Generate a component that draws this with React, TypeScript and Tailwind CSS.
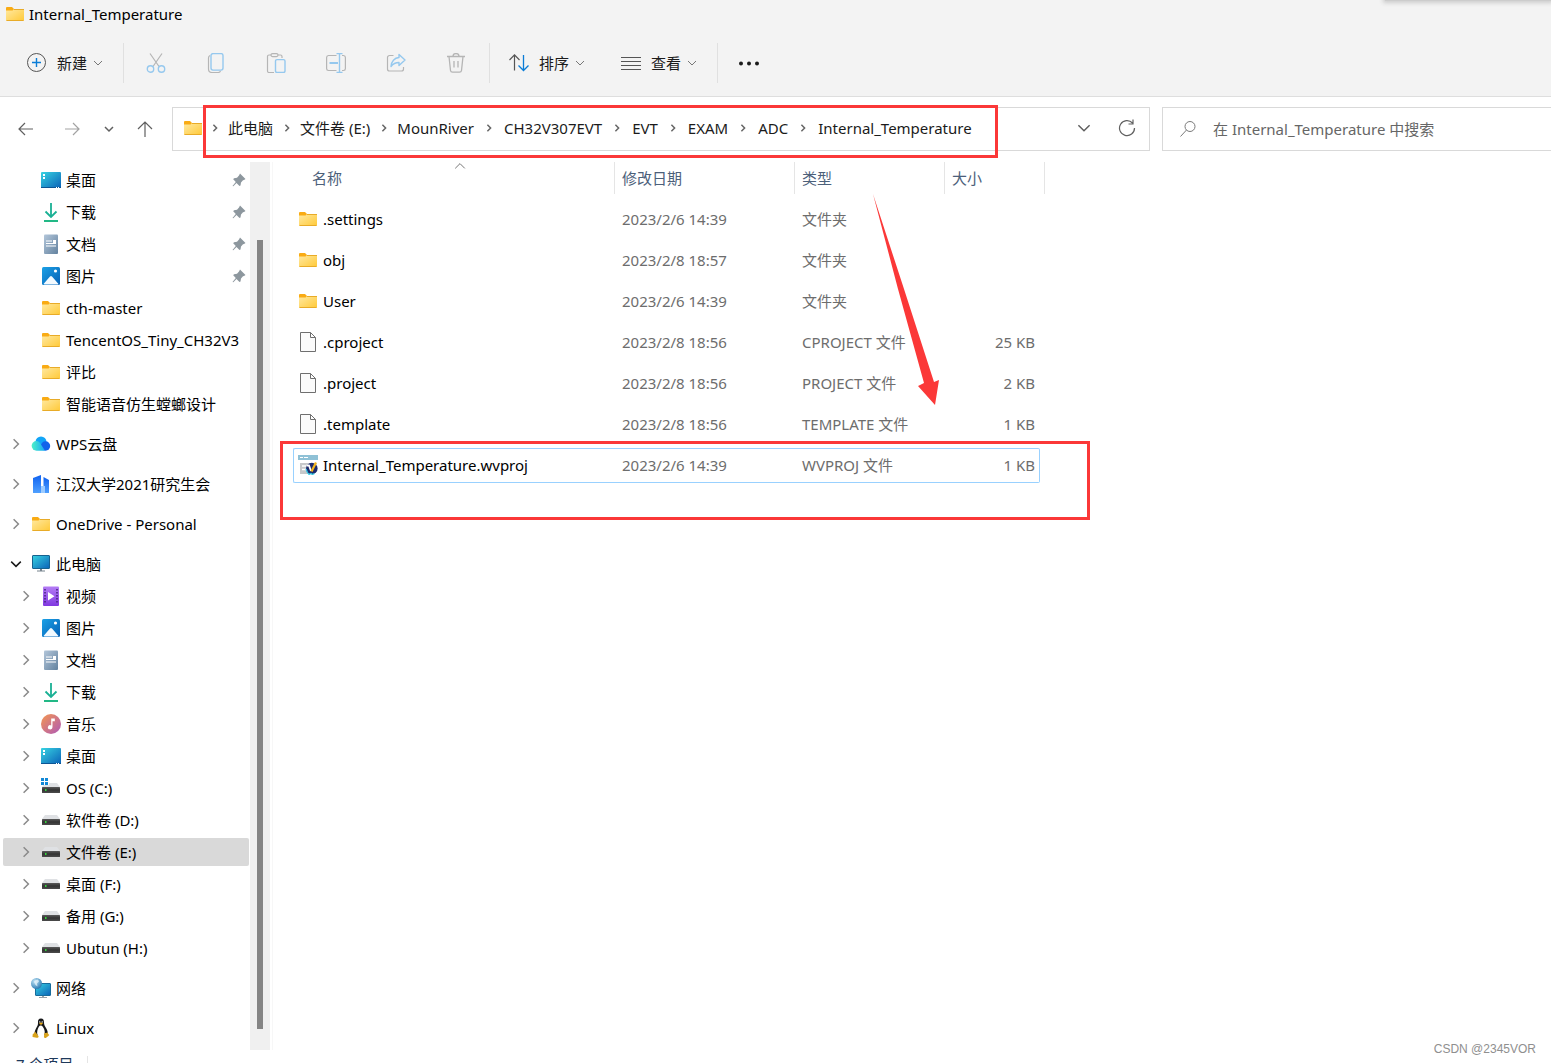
import { useState } from 'react';
import type { ReactNode } from 'react';
import clsx from 'clsx';

type IconName =
    | 'folder' | 'desktop' | 'download' | 'document' | 'picture' | 'cloud' | 'building'
    | 'pc' | 'video' | 'music' | 'osDrive' | 'drive' | 'network' | 'linux' | 'file' | 'wvproj';

interface TreeItem {
    label: string;
    icon: IconName;
    nested?: boolean;
    pinned?: boolean;
    arrow?: 'closed' | 'open';
    current?: boolean;
}

interface FileItem {
    name: string;
    date: string;
    type: string;
    size: string;
    icon: IconName;
}

const tree: TreeItem[] = [
    { label: '桌面', icon: 'desktop', nested: true, pinned: true },
    { label: '下载', icon: 'download', nested: true, pinned: true },
    { label: '文档', icon: 'document', nested: true, pinned: true },
    { label: '图片', icon: 'picture', nested: true, pinned: true },
    { label: 'cth-master', icon: 'folder', nested: true },
    { label: 'TencentOS_Tiny_CH32V3', icon: 'folder', nested: true },
    { label: '评比', icon: 'folder', nested: true },
    { label: '智能语音仿生螳螂设计', icon: 'folder', nested: true },
    { label: 'WPS云盘', icon: 'cloud', arrow: 'closed' },
    { label: '江汉大学2021研究生会', icon: 'building', arrow: 'closed' },
    { label: 'OneDrive - Personal', icon: 'folder', arrow: 'closed' },
    { label: '此电脑', icon: 'pc', arrow: 'open' },
    { label: '视频', icon: 'video', nested: true, arrow: 'closed' },
    { label: '图片', icon: 'picture', nested: true, arrow: 'closed' },
    { label: '文档', icon: 'document', nested: true, arrow: 'closed' },
    { label: '下载', icon: 'download', nested: true, arrow: 'closed' },
    { label: '音乐', icon: 'music', nested: true, arrow: 'closed' },
    { label: '桌面', icon: 'desktop', nested: true, arrow: 'closed' },
    { label: 'OS (C:)', icon: 'osDrive', nested: true, arrow: 'closed' },
    { label: '软件卷 (D:)', icon: 'drive', nested: true, arrow: 'closed' },
    { label: '文件卷 (E:)', icon: 'drive', nested: true, arrow: 'closed', current: true },
    { label: '桌面 (F:)', icon: 'drive', nested: true, arrow: 'closed' },
    { label: '备用 (G:)', icon: 'drive', nested: true, arrow: 'closed' },
    { label: 'Ubutun (H:)', icon: 'drive', nested: true, arrow: 'closed' },
    { label: '网络', icon: 'network', arrow: 'closed' },
    { label: 'Linux', icon: 'linux', arrow: 'closed' },
];

const files: FileItem[] = [
    { name: '.settings', date: '2023/2/6 14:39', type: '文件夹', size: '', icon: 'folder' },
    { name: 'obj', date: '2023/2/8 18:57', type: '文件夹', size: '', icon: 'folder' },
    { name: 'User', date: '2023/2/6 14:39', type: '文件夹', size: '', icon: 'folder' },
    { name: '.cproject', date: '2023/2/8 18:56', type: 'CPROJECT 文件', size: '25 KB', icon: 'file' },
    { name: '.project', date: '2023/2/8 18:56', type: 'PROJECT 文件', size: '2 KB', icon: 'file' },
    { name: '.template', date: '2023/2/8 18:56', type: 'TEMPLATE 文件', size: '1 KB', icon: 'file' },
    { name: 'Internal_Temperature.wvproj', date: '2023/2/6 14:39', type: 'WVPROJ 文件', size: '1 KB', icon: 'wvproj' },
];

const crumbs = ['此电脑', '文件卷 (E:)', 'MounRiver', 'CH32V307EVT', 'EVT', 'EXAM', 'ADC', 'Internal_Temperature'];

// Gradients shared by all the small icons
function Gradients() {
    return (
        <svg width="0" height="0" className="absolute" aria-hidden="true">
            <defs>
                <linearGradient id="gFolder" x1="0" y1="0" x2="1" y2="1">
                    <stop offset="0" stopColor="#ffe9a2" />
                    <stop offset="1" stopColor="#ffc937" />
                </linearGradient>
                <linearGradient id="gScreen" x1="0" y1="0" x2="1" y2="1">
                    <stop offset="0" stopColor="#37d3e2" />
                    <stop offset="1" stopColor="#0b62b8" />
                </linearGradient>
                <linearGradient id="gDoc" x1="0" y1="0" x2="1" y2="1">
                    <stop offset="0" stopColor="#b3c6da" />
                    <stop offset="1" stopColor="#63829f" />
                </linearGradient>
                <linearGradient id="gPic" x1="0" y1="0" x2="1" y2="1">
                    <stop offset="0" stopColor="#1ba1e6" />
                    <stop offset="1" stopColor="#0660b5" />
                </linearGradient>
                <linearGradient id="gVideo" x1="0" y1="0" x2="0" y2="1">
                    <stop offset="0" stopColor="#b47cf5" />
                    <stop offset="1" stopColor="#8038e0" />
                </linearGradient>
                <linearGradient id="gMusic" x1="0" y1="0" x2="1" y2="1">
                    <stop offset="0" stopColor="#f5974f" />
                    <stop offset="1" stopColor="#ae58b8" />
                </linearGradient>
                <linearGradient id="gBuild" x1="0" y1="0" x2="0" y2="1">
                    <stop offset="0" stopColor="#0f62f0" />
                    <stop offset="1" stopColor="#4fa0ff" />
                </linearGradient>
                <linearGradient id="gCloud" x1="0" y1="0" x2="1" y2="0">
                    <stop offset="0" stopColor="#4df0c8" />
                    <stop offset="1" stopColor="#19a8f5" />
                </linearGradient>
                <linearGradient id="gDrive" x1="0" y1="0" x2="0" y2="1">
                    <stop offset="0" stopColor="#5a5a5a" />
                    <stop offset="0.5" stopColor="#333333" />
                    <stop offset="1" stopColor="#4c4c4c" />
                </linearGradient>
                <radialGradient id="gGlobe" cx="0.35" cy="0.3" r="0.8">
                    <stop offset="0" stopColor="#bfe3f5" />
                    <stop offset="1" stopColor="#1f72ad" />
                </radialGradient>
            </defs>
        </svg>
    );
}

const driveBody = (
    <>
        <path d="M4 5h12l3 4H1z" fill="#dfe1e4" />
        <rect x="1" y="9" width="18" height="6" rx="0.5" fill="url(#gDrive)" />
        <rect x="4" y="11" width="1.500" height="2" fill="#35d43c" />
    </>
);

const iconShapes: Record<IconName, ReactNode> = {
    folder: (
        <>
            <path d="M1 4a1 1 0 0 1 1-1h5l2 2v3H1z" fill="#f9ab14" />
            <path d="M1 6.500h6.500L9 5h10v11a1 1 0 0 1-1 1H2a1 1 0 0 1-1-1z" fill="url(#gFolder)" />
            <path d="M9 5.500h10M1.500 16.500h17" stroke="#e8ab28" fill="none" />
        </>
    ),
    desktop: (
        <>
            <rect x="0" y="2" width="20" height="16" rx="1" fill="url(#gScreen)" />
            <path d="M2 4h2v2H2zM2 7h2v2H2z" fill="#fff" />
            <path d="M0 17h20v1H0z" fill="#0c5594" />
            <path d="M15 17h1v1h-1zM17 17h1v1h-1z" fill="#fff" />
        </>
    ),
    download: (
        <>
            <path d="M10 1v14M4.500 9.500L10 15l5.500-5.500" stroke="#19b094" strokeWidth="1.800" fill="none" />
            <path d="M3 19h14" stroke="#22b886" strokeWidth="2" />
        </>
    ),
    document: (
        <>
            <rect x="3" y="0.500" width="14" height="19.500" rx="1" fill="url(#gDoc)" />
            <path d="M5 7h6M5 9.500h10M5 12h10" stroke="#fff" strokeWidth="1.200" />
            <rect x="12" y="6" width="3" height="3" fill="#fff" />
        </>
    ),
    picture: (
        <>
            <rect x="1" y="1" width="18" height="18" rx="1.500" fill="url(#gPic)" />
            <path d="M2.500 18l6.500-7.500a1.300 1.300 0 0 1 2 0l6.500 7.500a1 1 0 0 1-1 .5h-13z" fill="#f3faff" />
            <circle cx="14.500" cy="5" r="1.600" fill="#fff" />
        </>
    ),
    cloud: (
        <>
            <circle cx="10" cy="8" r="5.500" fill="#12a5f7" />
            <circle cx="14.500" cy="12" r="4.700" fill="#1363ea" />
            <path d="M5.500 7a4.800 4.800 0 1 0 0 9.700H14L9 9a4.500 4.500 0 0 0-3.500-2z" fill="url(#gCloud)" />
        </>
    ),
    building: (
        <>
            <path d="M2 4L10 1v18H2z" fill="url(#gBuild)" />
            <path d="M12.500 3l5.500 3v13h-4v-7h-1.500z" fill="url(#gBuild)" />
            <path d="M10 12h4v7h-4z" fill="#9ccbff" />
        </>
    ),
    pc: (
        <>
            <rect x="1.500" y="1.500" width="17" height="13" rx="0.500" fill="url(#gScreen)" stroke="#17628f" />
            <path d="M9 15h2v1.500h3v1H6v-1h3z" fill="#77848e" />
        </>
    ),
    video: (
        <>
            <rect x="2" y="0.500" width="16" height="19.500" rx="1" fill="url(#gVideo)" />
            <path d="M4 3v15M16 3v15" stroke="#43217d" strokeWidth="1.500" strokeDasharray="1.500 1.500" />
            <path d="M7 6l6.500 4.300L7 14.500z" fill="#fff" />
        </>
    ),
    music: (
        <>
            <circle cx="10" cy="10" r="10" fill="url(#gMusic)" />
            <path d="M10.200 4.500h3.600v2.800h-2.300v6a2.300 2.100 0 1 1-1.300-1.900z" fill="#fff" />
        </>
    ),
    osDrive: (
        <>
            {driveBody}
            <path d="M0 0h8v7H0z" fill="#fff" />
            <path d="M0 0h3v3H0zM4 0h3v3H4zM0 4h3v3H0zM4 4h3v3H4z" fill="#1288d6" />
        </>
    ),
    drive: driveBody,
    network: (
        <>
            <rect x="4.500" y="5.500" width="15" height="12" rx="0.500" fill="url(#gScreen)" stroke="#176c9c" />
            <path d="M11 18h2v1h3v1H8v-1h3z" fill="#9aa3aa" />
            <circle cx="5.500" cy="5.500" r="5.500" fill="url(#gGlobe)" />
            <path d="M4 2.500l3-1 1 2-2 2 .5 3-2-1.500-1.500-3z" fill="#eef8fd" fillOpacity="0.700" />
        </>
    ),
    linux: (
        <>
            <path d="M10 0.500c-2.400 0-3.300 1.700-3 4.200.2 2.300-.9 3.700-2 5.900-1 2-2 4.400-1 6.400h12.500c.8-2.500-.3-5-1.500-7-1.300-2.100-2-3.200-2-5.500 0-2.400-.8-4-3-4z" fill="#17181a" />
            <path d="M9.800 7.500c-1.600 0-2.200 1.500-2.800 3-.8 2-1.300 4.800-.3 6.700 1.500 1.600 5 1.600 6.500 0 1-2 .6-4.700-.4-6.700-.7-1.500-1.400-3-3-3z" fill="#fff" />
            <path d="M8 5.200c1.200-1 2.800-1 4 0L10 7z" fill="#e6a91a" />
            <circle cx="8.800" cy="3.900" r="0.700" fill="#fff" />
            <circle cx="11.200" cy="3.900" r="0.700" fill="#fff" />
            <path d="M4 13.500l3.500 4.500c.3 1.300-.5 2-2 1.800L1.700 19c-.5-.8.1-1.500.1-3 .8-.3 1.500-1 2.200-2.500zM13.500 14.500c1 1 2.500.7 3-.2.4 1.500 1.300 2 1.800 2.700-.7 1.200-2.300 2-3.500 2.900-1.500.3-2-.7-1.800-2z" fill="#d9a31c" />
        </>
    ),
    file: (
        <path d="M2.500 0.500h10l5 5v14h-15zM12.500 0.500v5h5" fill="#fbfbfb" stroke="#6f6f6f" />
    ),
    wvproj: (
        <>
            <rect x="0" y="0" width="20" height="5" fill="#8fc1d6" />
            <path d="M2 2.500h3M6 2.500h4" stroke="#fff" />
            <path d="M2 8h12v11H2z" fill="#c6c8ca" />
            <path d="M4 11h4M4 14.500h4" stroke="#fff" strokeWidth="1.500" />
            <circle cx="13.800" cy="13.500" r="5.800" fill="#1d2a6d" />
            <path d="M8 14l1.500 3.500 1.500 2 2-1 1.500 1 2-1" stroke="#2fc9e6" strokeWidth="1.200" fill="none" />
            <path d="M8.500 10.500h2.500l2 5.500" stroke="#fff" strokeWidth="1.800" fill="none" />
            <path d="M13.500 16.500l4.500-9" stroke="#f4b51d" strokeWidth="2.200" fill="none" />
        </>
    ),
};

function Icon({ name }: { name: IconName }) {
    return (
        <svg viewBox="0 0 20 20" className="h-5 w-5 shrink-0" aria-hidden="true">
            {iconShapes[name]}
        </svg>
    );
}

function Chevron({ direction, className }: { direction: 'right' | 'down' | 'up'; className: string }) {
    return (
        <svg
            viewBox="0 0 10 10"
            className={clsx('shrink-0', direction === 'down' && 'rotate-90', direction === 'up' && '-rotate-90', className)}
            fill="none"
            stroke="currentColor"
            aria-hidden="true"
        >
            <path d="M3 1l4 4-4 4" vectorEffect="non-scaling-stroke" />
        </svg>
    );
}

function ToolIcon({ children }: { children: ReactNode }) {
    return (
        <svg viewBox="0 0 20 20" className="h-5 w-5 shrink-0" fill="none" aria-hidden="true">
            {children}
        </svg>
    );
}

const disabledTools: { label: string; shape: ReactNode }[] = [
    {
        label: '剪切',
        shape: (
            <>
                <path d="M4 0.500l9 13M16 0.500l-9 13" stroke="#b5b5b5" strokeWidth="1.200" />
                <circle cx="4.500" cy="16" r="3.200" stroke="#95c8ee" strokeWidth="1.400" />
                <circle cx="15.500" cy="16" r="3.200" stroke="#95c8ee" strokeWidth="1.400" />
            </>
        ),
    },
    {
        label: '复制',
        shape: (
            <>
                <path d="M4 2.500C3 3 2.500 3.500 2.500 5v11c0 2 1.500 3.500 3.500 3.500h6c1.300 0 2-.5 2.500-1.500" stroke="#b5b5b5" strokeWidth="1.200" />
                <rect x="5" y="0.600" width="12" height="16.500" rx="2" stroke="#95c8ee" strokeWidth="1.400" />
            </>
        ),
    },
    {
        label: '粘贴',
        shape: (
            <>
                <path d="M8 19.500H3A1.500 1.500 0 0 1 1.500 18V3.500A1.500 1.500 0 0 1 3 2h2M12 2h2.500A1.500 1.500 0 0 1 16 3.500V5" stroke="#b5b5b5" strokeWidth="1.200" />
                <rect x="5" y="0.600" width="7" height="3" rx="1.500" stroke="#b5b5b5" strokeWidth="1.200" />
                <rect x="9.500" y="6.600" width="9.500" height="12.900" rx="1.500" stroke="#95c8ee" strokeWidth="1.400" />
            </>
        ),
    },
    {
        label: '重命名',
        shape: (
            <>
                <path d="M10.500 2.500H2.500A2 2 0 0 0 .6 4.500v11a2 2 0 0 0 1.900 2h8M16 2.500h1.500a2 2 0 0 1 1.900 2v11a2 2 0 0 1-1.900 2H16" stroke="#b5b5b5" strokeWidth="1.200" />
                <path d="M3.500 10H12" stroke="#95c8ee" strokeWidth="2" />
                <path d="M13.500 0.600v18.800M10.500 0.600h6M10.500 19.400h6" stroke="#95c8ee" strokeWidth="1.400" />
            </>
        ),
    },
    {
        label: '共享',
        shape: (
            <>
                <path d="M7.500 2.500H3.500a2 2 0 0 0-2 2v11.500a2 2 0 0 0 2 2h12a2 2 0 0 0 2-2V14" stroke="#b5b5b5" strokeWidth="1.200" />
                <path d="M13 1.500L19 7l-6 5.500V9.500c-3.500 0-5.800 1-8 4 .3-5 3.500-8.700 8-9z" stroke="#95c8ee" strokeWidth="1.400" strokeLinejoin="round" />
            </>
        ),
    },
    {
        label: '删除',
        shape: (
            <>
                <path d="M1 3.500h18M7 3.300a3 2.700 0 0 1 6 0M3 3.500l1.500 14a2 2 0 0 0 2 1.700h7a2 2 0 0 0 2-1.700l1.500-14" stroke="#b5b5b5" strokeWidth="1.300" />
                <path d="M8 8v6.500M12 8v6.500" stroke="#b5b5b5" strokeWidth="1.300" />
            </>
        ),
    },
];

function Toolbar() {
    return (
        <div className="flex h-[66px] items-center border-b border-[#dedede] pb-0.5 pl-[27px] text-[#1b1b1b]">
            <button className="flex items-center">
                <ToolIcon>
                    <circle cx="9.500" cy="9.500" r="9" stroke="#555" />
                    <path d="M9.500 5v9M5 9.500h9" stroke="#0a7cd6" strokeWidth="1.400" />
                </ToolIcon>
                <span className="ml-2.5">新建</span>
                <Chevron direction="down" className="ml-1.5 h-2.5 w-2.5 text-[#777]" />
            </button>
            <div className="ml-5 h-10 w-px bg-[#e0e0e0]" />
            <div className="ml-0.5 flex">
                {disabledTools.map((tool) => (
                    <button key={tool.label} aria-label={tool.label} disabled className="flex h-10 w-[60px] items-center justify-center">
                        <ToolIcon>{tool.shape}</ToolIcon>
                    </button>
                ))}
            </div>
            <div className="ml-[3px] h-10 w-px bg-[#e0e0e0]" />
            <button className="ml-[19px] flex items-center">
                <ToolIcon>
                    <path d="M5.500 17.500V2M0.500 7l5-5.200L10.500 7" stroke="#555" strokeWidth="1.200" />
                    <path d="M14.500 2v15.500M9.500 12.500l5 5 5-5" stroke="#0a7cd6" strokeWidth="1.300" />
                </ToolIcon>
                <span className="ml-2.5">排序</span>
                <Chevron direction="down" className="ml-1.5 h-2.5 w-2.5 text-[#777]" />
            </button>
            <button className="ml-9 flex items-center">
                <ToolIcon>
                    <path d="M0 4.500h20M0 8.500h20M0 12.500h20M0 16.500h20" stroke="#555" />
                </ToolIcon>
                <span className="ml-2.5">查看</span>
                <Chevron direction="down" className="ml-1.5 h-2.5 w-2.5 text-[#777]" />
            </button>
            <div className="ml-5 h-10 w-px bg-[#e0e0e0]" />
            <button aria-label="更多" className="ml-[21px]">
                <ToolIcon>
                    <circle cx="2" cy="10.500" r="2" fill="#1b1b1b" />
                    <circle cx="10" cy="10.500" r="2" fill="#1b1b1b" />
                    <circle cx="18" cy="10.500" r="2" fill="#1b1b1b" />
                </ToolIcon>
            </button>
        </div>
    );
}

function NavBar() {
    return (
        <div className="flex items-center pt-2.5 pb-[5px]">
            <div className="flex w-[172px] shrink-0 items-center gap-1.5 pl-1.5 text-[#606060]">
                <button aria-label="后退" className="flex w-10 justify-center">
                    <svg viewBox="0 0 16 16" className="h-4 w-4" fill="none" stroke="currentColor" strokeWidth="1.200">
                        <path d="M15 8H1M7 2L1 8l6 6" />
                    </svg>
                </button>
                <button aria-label="前进" className="flex w-10 justify-center text-[#a3a3a3]">
                    <svg viewBox="0 0 16 16" className="h-4 w-4" fill="none" stroke="currentColor" strokeWidth="1.200">
                        <path d="M1 8h14M9 2l6 6-6 6" />
                    </svg>
                </button>
                <button aria-label="最近浏览的位置" className="flex w-[22px] justify-center">
                    <Chevron direction="down" className="h-2.5 w-2.5 stroke-[1.5]" />
                </button>
                <button aria-label="向上" className="flex w-[38px] justify-center">
                    <svg viewBox="0 0 16 16" className="h-4 w-4" fill="none" stroke="currentColor" strokeWidth="1.200">
                        <path d="M8 16V1M1 8l7-7 7 7" />
                    </svg>
                </button>
            </div>
            <div className="flex h-11 min-w-0 flex-1 items-center border border-[#d9d9d9] pb-0.5 pl-2.5 text-[#1b1b1b]">
                <Icon name="folder" />
                {crumbs.map((crumb, i) => (
                    <div key={crumb} className={clsx('flex items-center', i === 0 && '-ml-0.5')}>
                        <span className={clsx('flex justify-center text-[#666]', i < 3 ? 'w-[27px]' : 'w-[30px]')}>
                            <Chevron direction="right" className="h-2 w-2 stroke-[1.5]" />
                        </span>
                        <a href="#" className="whitespace-nowrap">{crumb}</a>
                    </div>
                ))}
                <button aria-label="以前的位置" className="ml-auto flex w-[43px] shrink-0 justify-center text-[#606060]">
                    <Chevron direction="down" className="h-3.5 w-3.5 stroke-[1.5]" />
                </button>
                <button aria-label="刷新" className="flex w-11 shrink-0 justify-center text-[#606060]">
                    <svg viewBox="0 0 18 18" className="h-[18px] w-[18px]" fill="none" stroke="currentColor" strokeWidth="1.200">
                        <path d="M14.500 4A7.500 7.500 0 1 0 16.500 9M15 0.500v4.500h-4.500" />
                    </svg>
                </button>
            </div>
            <label className="ml-3 flex h-11 w-[389px] shrink-0 items-center border border-r-0 border-[#d9d9d9] pl-[17px]">
                <svg viewBox="0 0 16 16" className="h-4 w-4 shrink-0" fill="none" stroke="#7a7a7a">
                    <circle cx="10" cy="5.500" r="5" />
                    <path d="M6.500 9L0.500 15.500" />
                </svg>
                <input
                    type="search"
                    aria-label="搜索"
                    placeholder="在 Internal_Temperature 中搜索"
                    className="ml-[17px] min-w-0 flex-1 outline-none placeholder:text-[#666]"
                />
            </label>
        </div>
    );
}

function Sidebar() {
    return (
        <nav className="w-[250px] shrink-0 pt-0.5 pb-1.5">
            <ul>
                {tree.map((item, i) => (
                    <li key={i} className={clsx('pr-px pl-[3px]', !item.nested && 'pt-2')}>
                        <div className="flex h-8 items-center">
                            <a
                                href="#"
                                className={clsx(
                                    'flex h-7 w-full items-center gap-[5px] rounded-xs',
                                    item.nested ? 'pl-[13px]' : 'pl-[3px]',
                                    item.current && 'bg-[#d9d9d9]'
                                )}
                            >
                                <span className="flex w-5 shrink-0 justify-center">
                                    {item.arrow === 'closed' && <Chevron direction="right" className="h-3 w-3 stroke-[1.5] text-[#8a8a8a]" />}
                                    {item.arrow === 'open' && <Chevron direction="down" className="h-3 w-3 stroke-[1.5] text-[#1b1b1b]" />}
                                </span>
                                <Icon name={item.icon} />
                                <span className="whitespace-nowrap">{item.label}</span>
                                {item.pinned && (
                                    <svg viewBox="0 0 14 14" className="mr-[3px] ml-auto h-3.5 w-3.5" fill="#8d979e">
                                        <path d="M8 0.500L13.500 6l-1.500 1-1 .2-2 2.300-.5 3-1 .5-3-3L1.300 13.300.5 13l3.300-4L1.200 6.200l.8-1 3-.5L7 2.500z" />
                                    </svg>
                                )}
                            </a>
                        </div>
                    </li>
                ))}
            </ul>
        </nav>
    );
}

function FileTable() {
    const [selected, setSelected] = useState('Internal_Temperature.wvproj');

    return (
        <table className="w-[747px] table-fixed border-separate border-spacing-x-0 border-spacing-y-1.5">
            <colgroup>
                <col className="w-[322px]" />
                <col className="w-[180px]" />
                <col className="w-[150px]" />
                <col className="w-[95px]" />
            </colgroup>
            <thead>
                <tr className="h-[34px] text-left align-top text-[#4c607a]">
                    <th className="p-0 font-normal">
                        <div className="relative flex h-8 items-center border-r border-[#e5e5e5] pl-[19px]">
                            名称
                            <Chevron direction="up" className="absolute top-[-2px] left-[161px] h-3 w-3 text-[#777]" />
                        </div>
                    </th>
                    <th className="p-0 font-normal">
                        <div className="flex h-8 items-center border-r border-[#e5e5e5] pl-[7px]">修改日期</div>
                    </th>
                    <th className="p-0 font-normal">
                        <div className="flex h-8 items-center border-r border-[#e5e5e5] pl-[7px]">类型</div>
                    </th>
                    <th className="p-0 font-normal">
                        <div className="flex h-8 w-[100px] items-center border-r border-[#e5e5e5] pl-[7px]">大小</div>
                    </th>
                </tr>
            </thead>
            <tbody>
                {files.map((file) => {
                    const border = file.name === selected ? 'border-[#99d1ff]' : 'border-transparent';
                    return (
                        <tr key={file.name} className="h-[35px] text-[#6d6d6d]" onClick={() => setSelected(file.name)}>
                            <td className={clsx('rounded-l-xs border-y border-l p-0 pb-px pl-1', border)}>
                                <div className="flex items-center gap-[5px] text-black">
                                    <Icon name={file.icon} />
                                    {file.name}
                                </div>
                            </td>
                            <td className={clsx('border-y p-0 pb-px pl-[7px]', border)}>{file.date}</td>
                            <td className={clsx('border-y p-0 pb-px pl-[7px]', border)}>{file.type}</td>
                            <td className={clsx('rounded-r-xs border-y border-r p-0 pr-1 pb-px text-right', border)}>{file.size}</td>
                        </tr>
                    );
                })}
            </tbody>
        </table>
    );
}

// Red marks drawn over the window
function Annotations() {
    return (
        <div className="pointer-events-none">
            <div className="absolute top-[105px] left-[203px] h-[53px] w-[795px] border-3 border-[#fb3838]" />
            <div className="absolute top-[441px] left-[280px] h-[79px] w-[810px] border-3 border-[#fb3838]" />
            <svg viewBox="0 0 66 211" className="absolute top-[194px] left-[873px] h-[211px] w-[66px]" fill="#fb3838">
                <path d="M0 0L31 95 61 188 66 186 62 211 45 192 51 189 25 95z" />
            </svg>
        </div>
    );
}

export default function App() {
    return (
        <div className="relative h-screen overflow-hidden bg-white font-['Noto_Sans','Noto_Sans_CJK_SC',sans-serif] text-[15px] leading-5 text-black">
            <Gradients />
            <header className="bg-[#f3f3f3]">
                <div className="flex h-[31px] items-center gap-1 pb-[3px] pl-[5px]">
                    <Icon name="folder" />
                    <h1>Internal_Temperature</h1>
                </div>
                <Toolbar />
            </header>
            <NavBar />
            <div className="flex items-start">
                <div className="mt-1.5 flex shrink-0 border-r border-[#f7f7f7] pr-0.5">
                    <Sidebar />
                    <div className="flex w-5 justify-center bg-[#f0f0f0] pt-[78px] pb-[21px]">
                        <div className="w-1.5 bg-[#858585]" />
                    </div>
                </div>
                <main className="pl-5">
                    <FileTable />
                </main>
            </div>
            <footer className="flex h-7 items-center pl-4 text-[#1e395b]">
                <span>7 个项目</span>
                <div className="ml-3.5 h-4 w-px bg-[#e5e5e5]" />
            </footer>
            <Annotations />
            <div className="absolute top-[-4px] right-0 h-[5px] w-[166px] bg-[#cccccc] shadow-[0_0_4px_2px_#cccccc]" />
            <div className="absolute top-[1039px] right-[15px] font-['Liberation_Sans',sans-serif] text-[12px] text-[#8f8f8f]">
                CSDN @2345VOR
            </div>
        </div>
    );
}
